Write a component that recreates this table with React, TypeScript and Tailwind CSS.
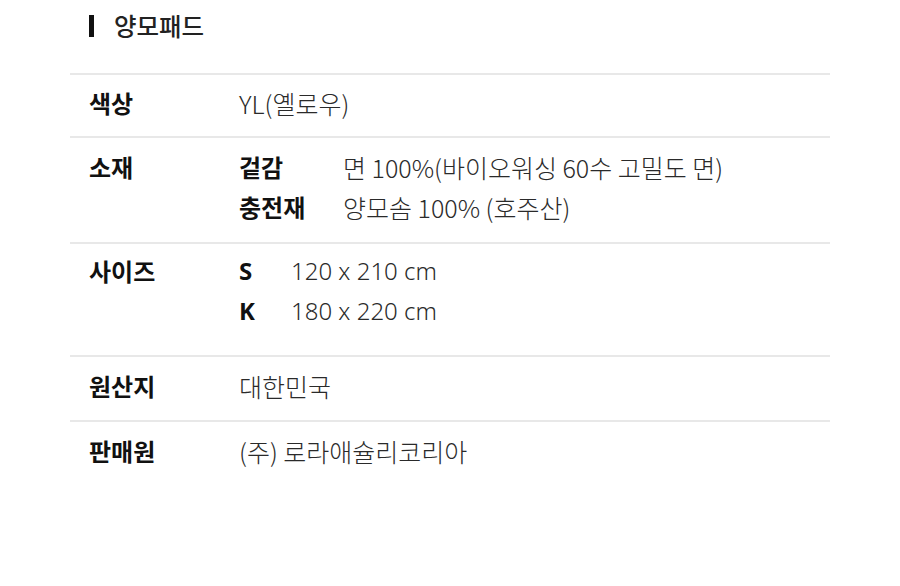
const font = { fontFamily: '"Noto Sans CJK KR", "Noto Sans", sans-serif' }
const latin = { fontFamily: '"Noto Sans", "Noto Sans CJK KR", sans-serif' }

function Row({ label, children, className = '' }: { label: string; children: React.ReactNode; className?: string }) {
  return (
    <div className={`flex border-t-2 border-[#e8e8e8] pl-[19px] ${className}`}>
      <div className="w-[150px] shrink-0 text-[24px] font-bold leading-[40px] text-[#111]">{label}</div>
      <div className="text-[25px] font-light leading-[40px] text-[#2a2a2a]">{children}</div>
    </div>
  )
}

export default function App() {
  return (
    <div className="min-h-[586px] bg-white" style={font}>
      <div className="mx-auto w-[760px]">
        <div className="flex h-[73px] items-start pl-[19px] pt-[8px]">
          <div className="mt-[7px] h-[22px] w-[5px] bg-[#111]" />
          <h2 className="ml-[20px] text-[24.5px] font-medium leading-[36px] text-[#222]">양모패드</h2>
        </div>

        <Row label="색상" className="pt-[8px] pb-[13px]">YL(옐로우)</Row>

        <Row label="소재" className="pt-[9px] pb-[15px]">
          <div className="flex">
            <span className="w-[104px] font-bold text-[#111] text-[24px]">겉감</span>
            <span>면 100%(바이오워싱 60수 고밀도 면)</span>
          </div>
          <div className="flex">
            <span className="w-[104px] font-bold text-[#111] text-[24px]">충전재</span>
            <span>양모솜 100% (호주산)</span>
          </div>
        </Row>

        <Row label="사이즈" className="pt-[7px] pb-[24px]">
          <div className="flex text-[24px]" style={latin}>
            <span className="w-[52px] font-bold text-[#111]">S</span>
            <span>120 x 210 cm</span>
          </div>
          <div className="flex text-[24px]" style={latin}>
            <span className="w-[52px] font-bold text-[#111]">K</span>
            <span>180 x 220 cm</span>
          </div>
        </Row>

        <Row label="원산지" className="pt-[9px] pb-[14px]">대한민국</Row>

        <Row label="판매원" className="pt-[9px] pb-[14px]">(주) 로라애슐리코리아</Row>
      </div>
    </div>
  )
}
